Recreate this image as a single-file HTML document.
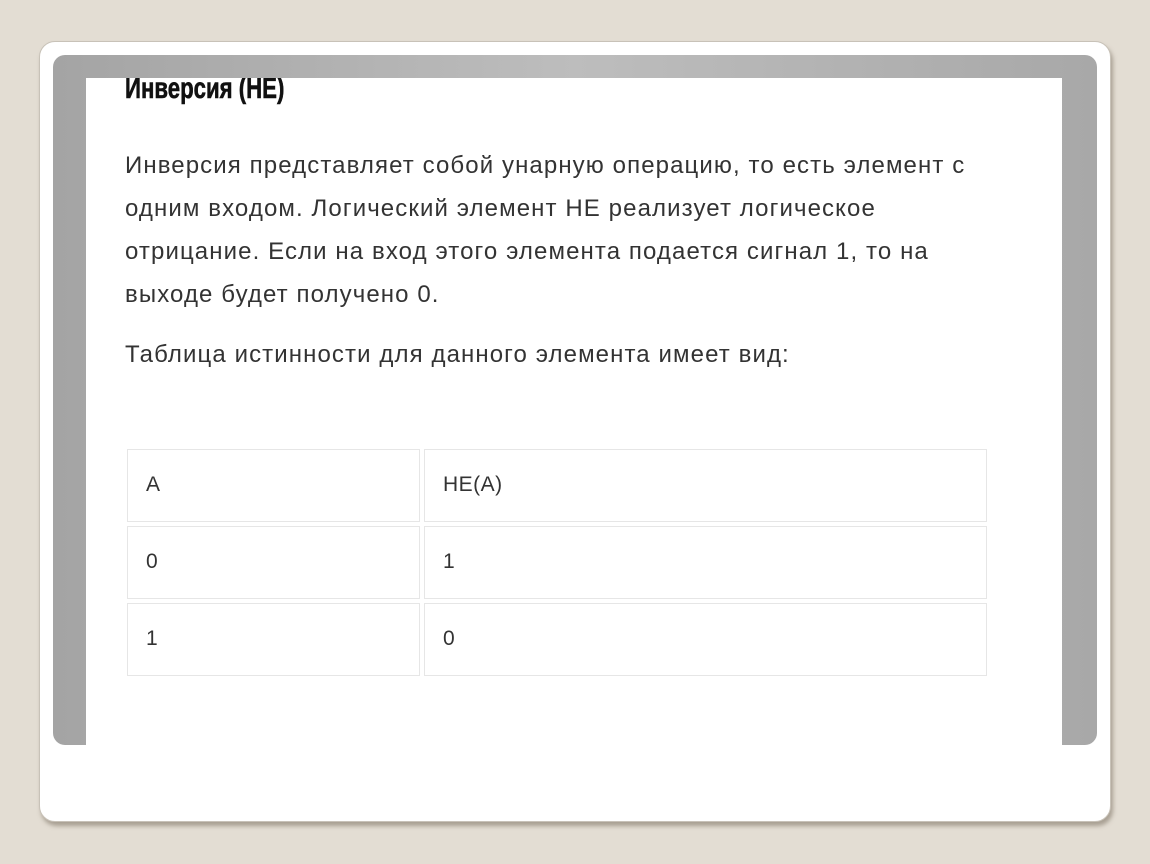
<!DOCTYPE html>
<html><head><meta charset="utf-8"><style>
body{margin:0;width:1150px;height:864px;background:#e3ddd3;position:relative;overflow:hidden;font-family:"Liberation Sans","DejaVu Sans",sans-serif}
.card{position:absolute;left:39px;top:41px;width:1072px;height:781px;background:#fff;border-radius:16px;box-shadow:2px 4px 4px rgba(120,110,95,.55);border:1px solid #c8c2b8;box-sizing:border-box}
.frame{position:absolute;left:53px;top:55px;width:1044px;height:690px;border-radius:12px;background:linear-gradient(90deg,#a4a4a4,#bdbdbd 50%,#a8a8a8)}
.inner{position:absolute;left:86px;top:78px;width:976px;height:667px;background:#fff;overflow:hidden}
h1{position:absolute;left:39px;top:-6px;margin:0;font-family:"Liberation Sans Narrow","Liberation Sans",sans-serif;font-weight:bold;font-size:30px;color:#111;transform:scaleX(.74);transform-origin:left;white-space:nowrap;-webkit-text-stroke:0.6px #111}
p{position:absolute;left:39px;margin:0;font-size:24px;line-height:43px;color:#333;white-space:nowrap;letter-spacing:1.1px}
.c{position:absolute;border:1px solid #e6e6e6;box-sizing:border-box;font-size:21px;color:#333;padding-left:18px;line-height:70px;letter-spacing:0.5px}
</style></head><body>
<div class="card"></div>
<div class="frame"></div>
<div class="inner">
<h1>Инверсия (НЕ)</h1>
<p style="top:66px">Инверсия представляет собой унарную операцию, то есть элемент с<br>одним входом. Логический элемент НЕ реализует логическое<br>отрицание. Если на вход этого элемента подается сигнал 1, то на<br>выходе будет получено 0.</p>
<p style="top:255px">Таблица истинности для данного элемента имеет вид:</p>
<div class="c" style="left:41px;top:371px;width:293px;height:73px">A</div>
<div class="c" style="left:338px;top:371px;width:563px;height:73px">НЕ(A)</div>
<div class="c" style="left:41px;top:448px;width:293px;height:73px">0</div>
<div class="c" style="left:338px;top:448px;width:563px;height:73px">1</div>
<div class="c" style="left:41px;top:525px;width:293px;height:73px">1</div>
<div class="c" style="left:338px;top:525px;width:563px;height:73px">0</div>
</div>
</body></html>
